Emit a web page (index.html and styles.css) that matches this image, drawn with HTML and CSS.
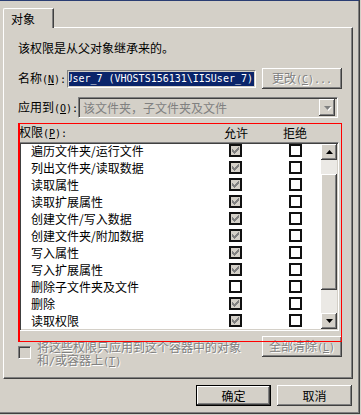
FILE: index.html
```
<!DOCTYPE html>
<html lang="zh-CN">
<head>
    <meta charset="UTF-8">
    <title>权限项目</title>
    <link rel="stylesheet" href="styles.css">
</head>
<body>
<div class="window">
    <div class="titleline"></div>

    <div class="tabs">
        <div class="tab">对象</div>
    </div>

    <div class="panel">
        <div class="inherit">该权限是从父对象继承来的。</div>

        <div class="name-row">
            <span class="label name-label">名称<span class="en">(<u>N</u>):</span></span>
            <div class="field">
                <div class="selected"><span class="en">IISUser_7 (VHOSTS156131\IISUser_7)</span></div>
            </div>
            <button class="btn change" disabled>更改<span class="en">(<u>C</u>)...</span></button>
        </div>

        <div class="apply-row">
            <span class="label apply-label">应用到<span class="en">(<u>O</u>):</span></span>
            <div class="combo">
                <span class="combo-text">该文件夹，子文件夹及文件</span>
                <span class="combo-btn">
                    <svg width="7" height="4" viewBox="0 0 7 4"><polygon points="0,0 7,0 3.5,4" fill="#808080"/></svg>
                </span>
            </div>
        </div>

        <div class="perm">
            <div class="perm-head">
                <span class="perm-title">权限<span class="en">(<u>P</u>):</span></span>
                <span class="col">允许</span>
                <span class="col">拒绝</span>
            </div>

            <div class="listbox">
                <div class="rows" id="rows"></div>
                <div class="scrollbar">
                    <span class="sb-btn">
                        <svg width="7" height="4" viewBox="0 0 7 4"><polygon points="0,4 7,4 3.5,0" fill="#000"/></svg>
                    </span>
                    <span class="sb-track top"></span>
                    <span class="sb-thumb"></span>
                    <span class="sb-track"></span>
                    <span class="sb-btn">
                        <svg width="7" height="4" viewBox="0 0 7 4"><polygon points="0,0 7,0 3.5,4" fill="#000"/></svg>
                    </span>
                </div>
            </div>

            <div class="opt-row">
                <div class="opt">
                    <span class="box3d"></span>
                    <span class="opt-text">将这些权限只应用到这个容器中的对象和<span class="en">/</span>或容器上<span class="en">(<u>T</u>)</span></span>
                </div>
                <button class="btn clear" disabled>全部清除<span class="en">(<u>L</u>)</span></button>
            </div>

            <div class="mark"></div>
        </div>
    </div>

    <div class="footer">
        <button class="btn default">确定</button>
        <button class="btn">取消</button>
    </div>
</div>

<script>
    // permission rows: name, allow state, deny state
    const perms = [
        ['遍历文件夹/运行文件', 'inherit', 'off'],
        ['列出文件夹/读取数据', 'inherit', 'off'],
        ['读取属性', 'inherit', 'off'],
        ['读取扩展属性', 'inherit', 'off'],
        ['创建文件/写入数据', 'inherit', 'off'],
        ['创建文件夹/附加数据', 'inherit', 'off'],
        ['写入属性', 'inherit', 'off'],
        ['写入扩展属性', 'inherit', 'off'],
        ['删除子文件夹及文件', 'off', 'off'],
        ['删除', 'inherit', 'off'],
        ['读取权限', 'inherit', 'off']
    ];

    const tick = '<svg width="7" height="7" viewBox="0 0 7 7" shape-rendering="crispEdges" fill="#808080">' +
        '<rect x="0" y="2" width="1" height="3"/><rect x="1" y="3" width="1" height="3"/>' +
        '<rect x="2" y="4" width="1" height="3"/><rect x="3" y="3" width="1" height="3"/>' +
        '<rect x="4" y="2" width="1" height="3"/><rect x="5" y="1" width="1" height="3"/>' +
        '<rect x="6" y="0" width="1" height="3"/></svg>';

    function checkbox(state) {
        const box = document.createElement('span');
        box.className = 'chk ' + state;
        if (state === 'inherit') box.innerHTML = tick;
        return box;
    }

    const rows = document.getElementById('rows');
    perms.forEach(p => {
        const row = document.createElement('div');
        row.className = 'row';

        const name = document.createElement('span');
        name.className = 'row-name';
        name.innerText = p[0];

        row.appendChild(name);
        row.appendChild(checkbox(p[1]));
        row.appendChild(document.createElement('span'));
        row.appendChild(checkbox(p[2]));
        rows.appendChild(row);
    });
</script>
</body>
</html>
```

FILE: styles.css
```
body {
    margin: 0;
    padding: 0;
    background-color: #d4d0c8;
    color: #000;
    font-family: "Noto Sans CJK SC", sans-serif;
    font-size: 12px;
    overflow: hidden;
}

.window {
    width: 360px;
    height: 414px;
    box-sizing: border-box;
    border-right: 1px solid #404040;
    border-bottom: 1px solid #404040;
    box-shadow: inset -1px -1px #808080;
}

.titleline {
    height: 1px;
    background-color: #2a3d73;
}

.en {
    font-family: "DejaVu Sans Mono", monospace;
    font-size: 10px;
}

/* tab */
.tabs {
    padding: 7px 0 0 3px;
    display: flex;
}

.tab {
    position: relative;
    z-index: 1;
    width: 51px;
    height: 20px;
    box-sizing: border-box;
    margin-bottom: -1px;
    padding: 2px 0 0 7px;
    line-height: 15px;
    background-color: #d4d0c8;
    border-top: 1px solid #fff;
    border-left: 1px solid #fff;
    border-right: 1px solid #404040;
    border-top-left-radius: 2px;
    box-shadow: inset -1px 0 #808080;
}

.panel {
    margin-left: 3px;
    width: 350px;
    height: 352px;
    box-sizing: border-box;
    padding: 13px 10px 0 14px;
    border-top: 1px solid #fff;
    border-left: 1px solid #fff;
    border-right: 1px solid #404040;
    border-bottom: 1px solid #404040;
    box-shadow: inset -1px -1px #808080;
}

.inherit {
    line-height: 14px;
    height: 14px;
}

.name-row, .apply-row {
    display: flex;
    align-items: center;
    height: 21px;
}

.name-row {
    margin-top: 13px;
}

.apply-row {
    margin-top: 8px;
}

.label {
    white-space: nowrap;
    line-height: 14px;
}

.name-label {
    width: 49px;
}

.apply-label {
    width: 60px;
}

/* sunken name field with selected text */
.field {
    width: 189px;
    height: 18px;
    box-sizing: border-box;
    border: 1px solid;
    border-color: #808080 #fff #fff #808080;
    padding: 1px;
}

.selected {
    height: 100%;
    background-color: #0a246a;
    color: #fff;
    display: flex;
    justify-content: flex-end;
    align-items: center;
    overflow: hidden;
    white-space: nowrap;
    padding-right: 1px;
}

/* buttons */
.btn {
    font-family: "Noto Sans CJK SC", sans-serif;
    font-size: 12px;
    color: #000;
    background-color: #d4d0c8;
    border: none;
    padding: 0;
    width: 75px;
    height: 21px;
    line-height: 14px;
    box-shadow: inset -1px -1px #404040, inset 1px 1px #fff, inset -2px -2px #808080, inset 2px 2px #d4d0c8;
}

.btn:disabled {
    color: #808080;
    text-shadow: 1px 1px #fff;
}

.change {
    width: 80px;
    margin-left: 6px;
}

.btn.default {
    outline: 1px solid #000;
    outline-offset: -1px;
    box-shadow: inset -2px -2px #404040, inset 2px 2px #fff, inset -3px -3px #808080;
}

/* combo box */
.combo {
    width: 260px;
    height: 21px;
    box-sizing: border-box;
    border: 1px solid;
    border-color: #808080 #fff #fff #808080;
    box-shadow: inset 1px 1px #404040, inset -1px -1px #d4d0c8;
    display: flex;
    align-items: center;
    padding: 2px;
}

.combo-text {
    flex: 1;
    padding-left: 2px;
    color: #808080;
    line-height: 14px;
    white-space: nowrap;
}

.combo-btn {
    width: 16px;
    height: 17px;
    display: flex;
    align-items: center;
    justify-content: center;
    box-shadow: inset -1px -1px #404040, inset 1px 1px #fff, inset -2px -2px #808080;
}

.combo-btn svg {
    filter: drop-shadow(1px 1px 0 #fff);
}

/* permissions list */
.perm {
    position: relative;
    margin-top: 5px;
}

.perm-head {
    display: flex;
    align-items: center;
    height: 19px;
    padding-left: 1px;
    line-height: 14px;
}

.perm-title {
    flex: 1;
}

.col {
    width: 24px;
    margin-right: 35px;
    text-align: center;
}

.listbox {
    margin-left: 1px;
    width: 320px;
    height: 189px;
    box-sizing: border-box;
    border: 1px solid;
    border-color: #808080 #fff #fff #808080;
    box-shadow: inset 1px 1px #404040, inset -1px -1px #d4d0c8;
    padding: 1px;
    display: flex;
}

.rows {
    flex: 1;
    background-color: #fff;
}

.row {
    display: grid;
    grid-template-columns: 198px 13px 47px 13px;
    align-items: start;
    height: 17px;
    padding-left: 10px;
    line-height: 13px;
    white-space: nowrap;
}

.row:last-child {
    height: 15px;
}

.chk {
    width: 13px;
    height: 13px;
    box-sizing: border-box;
    border: 2px solid #111;
    background-color: #fff;
    display: flex;
    align-items: center;
    justify-content: center;
}

.chk.inherit {
    background-color: #d4d0c8;
}

.scrollbar {
    width: 16px;
    display: flex;
    flex-direction: column;
}

.sb-btn {
    height: 16px;
    display: flex;
    align-items: center;
    justify-content: center;
    background-color: #d4d0c8;
    box-shadow: inset -1px -1px #404040, inset 1px 1px #fff, inset -2px -2px #808080;
}

.sb-track {
    flex: 1;
    background-color: #ebe9e5;
}

.sb-track.top {
    flex: none;
    height: 14px;
}

.sb-thumb {
    height: 116px;
    background-color: #d4d0c8;
    box-shadow: inset -1px -1px #404040, inset 1px 1px #fff, inset -2px -2px #808080;
}

/* option under the list */
.opt-row {
    display: flex;
    align-items: flex-start;
    margin-top: 5px;
}

.opt {
    display: flex;
    align-items: flex-start;
}

.box3d {
    width: 13px;
    height: 13px;
    box-sizing: border-box;
    margin-top: 10px;
    border: 1px solid;
    border-color: #808080 #fff #fff #808080;
    box-shadow: inset 1px 1px #404040, inset -1px -1px #d4d0c8;
}

.opt-text {
    width: 210px;
    margin: 4px 0 0 6px;
    line-height: 13px;
    color: #808080;
    text-shadow: 1px 1px #fff;
}

.clear {
    width: 80px;
    margin-left: auto;
}

/* red frame drawn over the permission area */
.mark {
    position: absolute;
    left: 0;
    top: 0;
    width: 324px;
    height: 219px;
    box-sizing: border-box;
    border: 1px solid #f00;
    border-left-width: 2px;
    pointer-events: none;
}

.footer {
    display: flex;
    justify-content: flex-end;
    gap: 6px;
    margin-top: 6px;
    padding-right: 7px;
}
```
